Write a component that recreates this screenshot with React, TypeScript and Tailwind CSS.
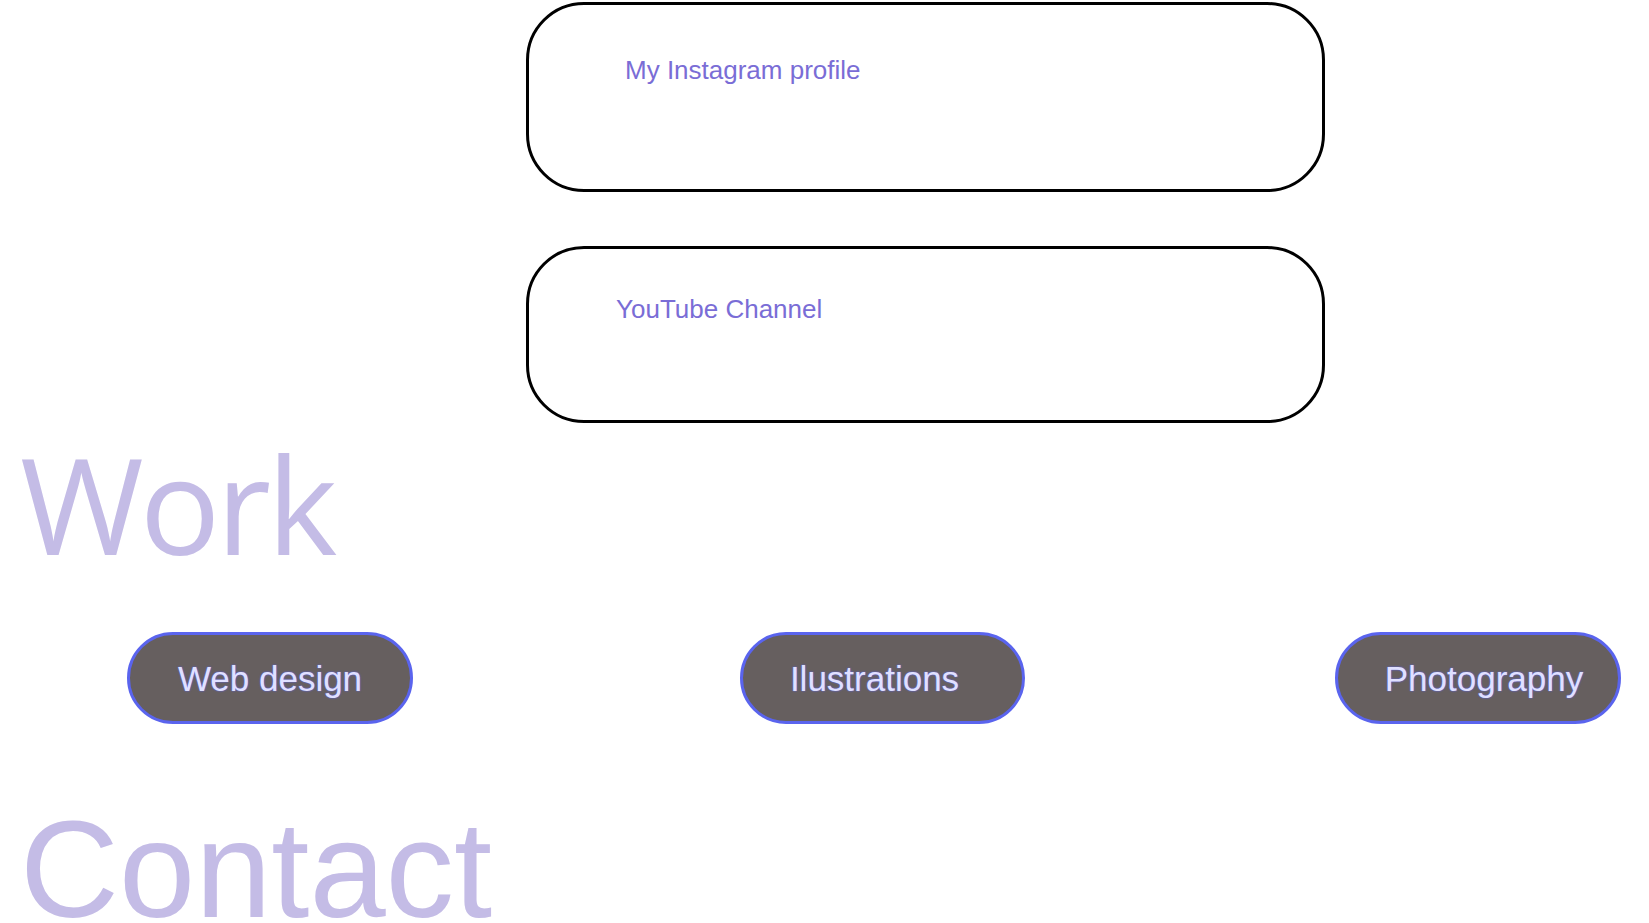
const links = [
  { label: "My Instagram profile", h: "h-[190px]", pad: "pl-[96px] pt-[52px]", mt: "mt-0" },
  { label: "YouTube Channel", h: "h-[177px]", pad: "pl-[87px] pt-[47px]", mt: "mt-[54px]" },
];

const work = [
  { label: "Web design", w: "w-[286px]", ml: "ml-[127px]", pad: "" },
  { label: "Ilustrations", w: "w-[285px]", ml: "ml-[327px]", pad: "pr-[16px]" },
  { label: "Photography", w: "w-[286px]", ml: "ml-[310px]", pad: "pl-[12px]" },
];

export default function App() {
  return (
    <div className="min-h-screen bg-white font-['Liberation_Sans',Arial,sans-serif]">
      {/* Links */}
      <div className="pl-[526px] pt-[2px]">
        {links.map((l) => (
          <div
            key={l.label}
            className={`${l.mt} ${l.h} ${l.pad} w-[799px] rounded-[58px] border-[3px] border-black`}
          >
            <span className="block text-[26px] leading-none text-[#7a6dd6]">{l.label}</span>
          </div>
        ))}
      </div>

      {/* Work */}
      <h2 className="mt-[13px] pl-[20px] font-['Open_Sans',sans-serif] text-[134px] leading-none tracking-[-4px] text-[#c4bce6]">
        Work
      </h2>
      <div className="mt-[62px] flex">
        {work.map((w) => (
          <div
            key={w.label}
            className={`${w.ml} ${w.w} ${w.pad} flex h-[92px] shrink-0 items-center justify-center rounded-full border-[3px] border-[#5a64ee] bg-[#665f5f]`}
          >
            <span className="text-[35px] leading-none text-[#e0e0ff] [text-shadow:0_0_2px_#5b63ff]">
              {w.label}
            </span>
          </div>
        ))}
      </div>

      {/* Contact */}
      <h2 className="mt-[77px] pl-[20px] text-[137px] leading-none text-[#c4bce6]">Contact</h2>
    </div>
  );
}
